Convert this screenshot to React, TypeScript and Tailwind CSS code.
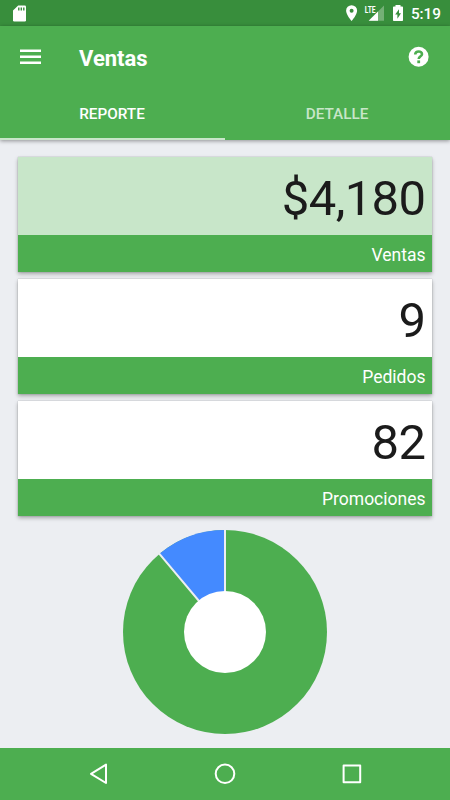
import React from "react";

const cards = [
  { value: "$4,180", label: "Ventas", tone: "bg-[#c8e6c9]" },
  { value: "9", label: "Pedidos", tone: "bg-white" },
  { value: "82", label: "Promociones", tone: "bg-white" },
];

function StatusBar() {
  return (
    <div className="flex h-[26px] items-center bg-[#388e3c] pl-[13px] pr-[9px] text-white">
      <svg className="h-[17px] w-[14px]" viewBox="0 0 14 17" fill="none">
        <path d="M5.2 0.5H11.8Q13 .5 13 1.7V15.3Q13 16.5 11.8 16.5H1.2Q0 16.5 0 15.3V5.5Z" fill="#fff" />
        <path d="M5.8 2.4V5.4M8.3 2.4V5.4M10.8 2.4V5.4" stroke="#388e3c" strokeWidth="1.4" />
      </svg>
      <svg className="ml-auto h-[18px] w-[62px]" viewBox="0 0 62 18" fill="none">
        <path d="M6.6 1.2A5.5 5.5 0 0 0 1.1 6.8C1.1 10.9 6.6 17 6.6 17S12.1 10.9 12.1 6.8A5.5 5.5 0 0 0 6.6 1.2ZM6.6 8.8A2 2 0 1 1 6.6 4.8A2 2 0 0 1 6.6 8.8Z" fill="#fff" />
        <path d="M39 1.5V16.8H23.7Z" fill="#fff" fillOpacity=".3" />
        <path d="M33 7.5V16.8H23.7Z" fill="#fff" />
        <path d="M19 0H31V7.5L29 9.8H19Z" fill="#388e3c" />
        <text x="19.8" y="8.5" fill="#fff" fontFamily="Roboto, sans-serif" fontSize="9.6" fontWeight="700" textLength="10.8" lengthAdjust="spacingAndGlyphs">LTE</text>
        <path d="M50.5 1H55.5V2.4H57.2Q58 2.4 58 3.2V16.2Q58 17 57.2 17H48.8Q48 17 48 16.2V3.2Q48 2.4 48.8 2.4H50.5Z" fill="#fff" />
        <path d="M54 5.2L50.2 10.6H52.4V14.7L56 9.3H54Z" fill="#388e3c" />
      </svg>
      <span className="ml-[4px] mt-[2px] text-[15.3px] leading-[18px] font-medium">5:19</span>
    </div>
  );
}

function Header() {
  return (
    <header className="relative z-10 h-[114px] bg-[#4dae50] text-white shadow-[0_1px_4px_rgba(0,0,0,0.4)]">
      <div className="flex h-[62px] items-center pl-5 pr-[21px]">
        <svg className="h-[16px] w-[21px]" viewBox="0 0 21 16" fill="#fff">
          <path d="M0 .6H21V2.9H0ZM0 6.6H21V8.9H0ZM0 12.6H21V14.9H0Z" />
        </svg>
        <h1 className="ml-[38px] mt-[3px] text-[22px] leading-[26px] font-bold">Ventas</h1>
        <svg className="ml-auto h-[20px] w-[20px] overflow-visible" viewBox="0 0 20 20">
          <circle cx="9.6" cy="9.8" r="10" fill="#fff" />
          <path d="M6.2 7.5C6.2 5.6 7.5 4.5 9.6 4.5S13 5.6 13 7.2C13 9.3 9.7 9.2 9.7 12.1" fill="none" stroke="#4dae50" strokeWidth="2.6" />
          <path d="M8.3 13.4H11.1V16.2H8.3Z" fill="#4dae50" />
        </svg>
      </div>
      <nav className="grid h-[52px] grid-cols-2 text-center text-[15.3px] leading-[52px] font-medium">
        <div className="h-[52px] border-b-2 border-[#c8e6c9]">
          <span className="relative right-[0.5px]">REPORTE</span>
        </div>
        <div className="text-[#c8e6c9]">
          <span className="relative right-[0.5px]">DETALLE</span>
        </div>
      </nav>
    </header>
  );
}

function Donut() {
  return (
    <svg className="mx-auto mt-[14px] block h-[204px] w-[204px]" viewBox="-102 -102 204 204">
      <circle r="102" fill="#4dae50" />
      <path d="M0 0V-102A102 102 0 0 0 -65.56 -78.14Z" fill="#448aff" />
      <path d="M0 0V-103M0 0L-66.2 -78.9" stroke="#eceef2" strokeWidth="2" />
      <circle r="41" fill="#fff" />
    </svg>
  );
}

export default function App() {
  return (
    <div className="flex h-[800px] w-[450px] flex-col overflow-hidden bg-[#eceef2] font-['Roboto',sans-serif]">
      <StatusBar />
      <Header />
      <main className="flex-1 px-[18px] pt-[17px]">
        <div className="flex flex-col gap-[7px]">
          {cards.map((card) => (
            <section key={card.label} className="h-[115px] shadow-[0_0_1px_rgba(0,0,0,0.3),0_2px_4px_rgba(0,0,0,0.3)]">
              <div className={`h-[78px] pr-[6.5px] text-right text-[49px] leading-[84px] tracking-[-0.6px] text-[#1b1b1b] ${card.tone}`}>
                {card.value}
              </div>
              <div className="h-[37px] bg-[#4dae50] pr-[6.5px] text-right text-[17.5px] leading-[40px] text-white">
                {card.label}
              </div>
            </section>
          ))}
        </div>
        <Donut />
      </main>
      <footer className="flex h-[52px] items-center justify-between bg-[#4dae50] pl-[88px] pr-[88px]">
        <svg className="h-[22px] w-[20px]" viewBox="0 0 20 22" fill="none" stroke="#fff" strokeWidth="2" strokeLinejoin="round">
          <path d="M18 1.6V20L3 10.8Z" />
        </svg>
        <svg className="h-[22px] w-[22px]" viewBox="0 0 22 22" fill="none" stroke="#fff" strokeWidth="2">
          <circle cx="11" cy="10.8" r="9.3" />
        </svg>
        <svg className="h-[20px] w-[20px]" viewBox="0 0 20 20" fill="none" stroke="#fff" strokeWidth="2" strokeLinejoin="round">
          <rect x="1.6" y="1.6" width="16.6" height="16.6" />
        </svg>
      </footer>
    </div>
  );
}
